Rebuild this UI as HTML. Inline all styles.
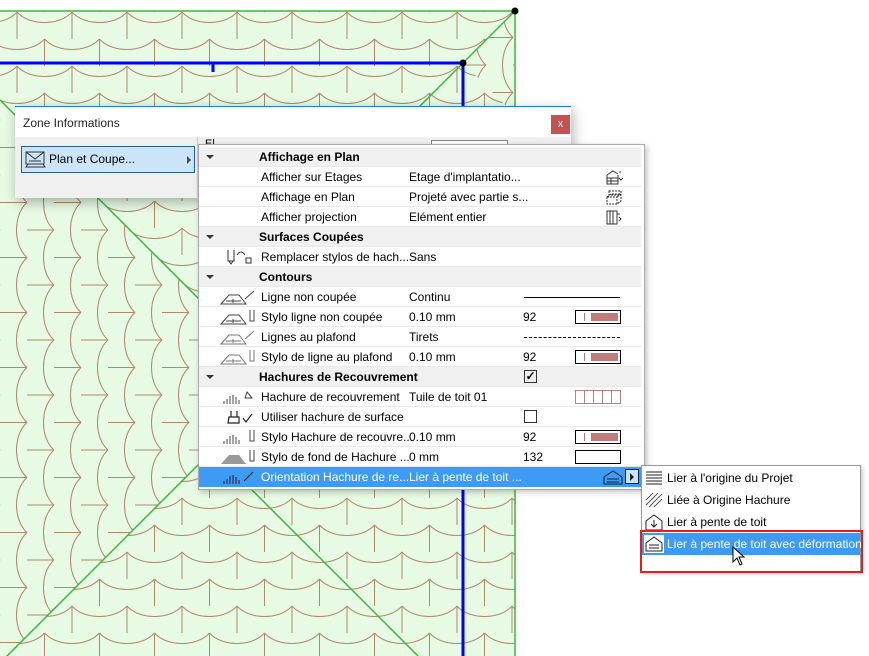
<!DOCTYPE html>
<html><head><meta charset="utf-8"><style>
*{margin:0;padding:0;box-sizing:border-box}
body{width:869px;height:656px;overflow:hidden;background:#fff;font-family:"Liberation Sans",sans-serif;font-size:12px;color:#000;position:relative}
.abs{position:absolute}
.row{position:absolute;left:199px;width:442px;height:20px;border-bottom:1px solid #e8e8e8;background:#fff}
.row span{position:absolute;top:3px;white-space:nowrap}
.hdr{background:#f0f0f0;font-weight:bold}
.tri{position:absolute;left:7px;top:8px;width:0;height:0;border-left:4px solid transparent;border-right:4px solid transparent;border-top:4px solid #333}
.l{left:62px}.v{left:210px}.n{left:324px}
.sw{position:absolute;left:376px;top:3px;width:46px;height:14px;border:1px solid #000;background:#fff}
.sw i{position:absolute;left:8px;top:2px;width:1px;height:8px;background:#c07070}
.sw b{position:absolute;left:15px;top:2px;width:27px;height:8px;background:#c07b7b}
.ic{position:absolute;left:20px;top:2px}
.ri{position:absolute;left:406px;top:2px}
.sel{background:#3d9bf6;color:#fff}
.mi{position:absolute;left:642px;width:218px;height:22px}
.mi span{position:absolute;left:25px;top:4px;white-space:nowrap}
</style></head><body>
<svg class="abs" style="left:0;top:0" width="869" height="656">
<defs>
<pattern id="p" width="55" height="54" patternUnits="userSpaceOnUse" x="17" y="12">
<path d="M0 0V27 M55 0V27 M0 0C12 14 43 14 55 0 M27.5 27V54 M-27.5 27C-15 41 15 41 27.5 27 M27.5 27C40 41 70 41 82.5 27 M0 54C12 68 43 68 55 54" fill="none" stroke="#b0886c" stroke-width="1"/>
</pattern>
<pattern id="q" width="55" height="54" patternUnits="userSpaceOnUse" x="10" y="0" patternTransform="rotate(90)">
<path d="M0 0V27 M55 0V27 M0 0C12 14 43 14 55 0 M27.5 27V54 M-27.5 27C-15 41 15 41 27.5 27 M27.5 27C40 41 70 41 82.5 27 M0 54C12 68 43 68 55 54" fill="none" stroke="#b0886c" stroke-width="1"/>
</pattern>
</defs>
<rect x="0" y="11" width="515" height="645" fill="#e6fae4"/>
<rect x="0" y="11" width="515" height="645" fill="url(#p)"/>
<polygon points="0,100 281,381 0,663" fill="#e6fae4"/>
<polygon points="0,100 281,381 0,663" fill="url(#q)"/>
<polygon points="515,11 463,63 515,115" fill="#e6fae4"/>
<polygon points="515,11 463,63 515,115" fill="url(#q)"/>
<path d="M0 11H515V656" fill="none" stroke="#3cb83c" stroke-width="1.5"/>
<path d="M515 11L300 226 M0 100L200 300 M230 433L0 663 M230 468L418 656" stroke="#3cb83c" stroke-width="1.5" fill="none"/>
<path d="M0 63H463V656 M213 63V72" stroke="#0000ff" stroke-width="3" fill="none"/>
<circle cx="515" cy="11" r="3.5" fill="#000"/><circle cx="463" cy="63" r="3.5" fill="#000"/>
</svg>
<!-- dialog -->
<div class="abs" style="left:15px;top:106px;width:556px;height:92px;background:#f0f0f0;border-top:1px solid #1a7ee0;box-shadow:2px 4px 12px rgba(0,0,0,.3)">
<div class="abs" style="left:0;top:0;width:556px;height:30px;background:#fff"></div>
<div class="abs" style="left:8px;top:9px;font-size:12px;color:#222">Zone Informations</div>
<div class="abs" style="left:536px;top:8px;width:19px;height:19px;background:#c75050;color:#fff;font-size:11px;text-align:center;line-height:18px">x</div>
<div class="abs" style="left:6px;top:39px;width:174px;height:27px;background:#cce4f7;border:1px solid #2a5f96"></div>
<svg class="abs" style="left:10px;top:43px" width="22" height="18"><path d="M1 2H19V14H1Z M1 2L10 9L19 2 M3 14L1 17H20L18 14 M4 11H16" fill="none" stroke="#333"/></svg>
<div class="abs" style="left:34px;top:45px">Plan et Coupe...</div>
<div class="abs" style="left:172px;top:49px;border-top:4px solid transparent;border-bottom:4px solid transparent;border-left:4px solid #444"></div>
<div class="abs" style="left:182px;top:30px;width:1px;height:62px;background:#ccc"></div>
<div class="abs" style="left:190px;top:31px;font-size:11px">El</div>
<div class="abs" style="left:416px;top:33px;width:77px;height:12px;border:1px solid #888;background:#fff"></div>
</div>
<!-- panel -->
<div class="abs" style="left:198px;top:144px;width:447px;height:346px;background:#fff;border:1px solid #aaa;box-shadow:2px 2px 6px rgba(0,0,0,.25)"></div>
<div class="row hdr" style="top:147px"><div class="tri"></div><span style="left:60px">Affichage en Plan</span></div>
<div class="row" style="top:167px"><span class="l">Afficher sur Etages</span><span class="v">Etage d'implantatio...</span><svg class="ri" width="18" height="16"><path d="M2 6L8 2L13 5 M2 6V15H13V6 M2 9H13M2 12H13M6 9V15 M15 2V4M14 9L16 11L18 9" fill="none" stroke="#333"/></svg></div>
<div class="row" style="top:187px"><span class="l">Affichage en Plan</span><span class="v">Projeté avec partie s...</span><svg class="ri" width="18" height="16"><path d="M4 2H16V6H4Z M2 8L6 5H16V12L12 15H2Z M2 8H12V15 M12 8L16 5" fill="none" stroke="#333" stroke-dasharray="2 1"/></svg></div>
<div class="row" style="top:207px"><span class="l">Afficher projection</span><span class="v">Elément entier</span><svg class="ri" width="18" height="16"><path d="M2 2H12V15H2Z M5 2V15M8 2V15 M12 5H15M14 8L16 10L14 12" fill="none" stroke="#333"/></svg></div>
<div class="row hdr" style="top:227px"><div class="tri"></div><span style="left:60px">Surfaces Coupées</span></div>
<div class="row" style="top:247px"><svg class="ic" width="36" height="16"><path d="M9 1V12H15V1 M10 12L12 15L14 12 M18 6Q22 0 26 6 M27 9h5v5h-5z" fill="none" stroke="#333"/></svg><span class="l">Remplacer stylos de hach...</span><span class="v">Sans</span></div>
<div class="row hdr" style="top:267px"><div class="tri"></div><span style="left:60px">Contours</span></div>
<div class="row" style="top:287px"><svg class="ic" width="40" height="16"><path d="M2 15L10 6H20L27 15Z M7 12H22 M14 10V14 M26 10L35 2" fill="none" stroke="#444"/></svg><span class="l">Ligne non coupée</span><span class="v">Continu</span><div class="abs" style="left:325px;top:10px;width:96px;height:1px;background:#000"></div></div>
<div class="row" style="top:307px"><svg class="ic" width="40" height="16"><path d="M2 15L10 6H20L27 15Z M7 12H22 M14 10V14 M31 1V12H35V1" fill="none" stroke="#444"/></svg><span class="l">Stylo ligne non coupée</span><span class="v">0.10 mm</span><span class="n">92</span><div class="sw"><i></i><b></b></div></div>
<div class="row" style="top:327px"><svg class="ic" width="40" height="16"><path d="M2 15L10 6H20L27 15Z M7 12H22 M14 10V14 M26 10L35 2" fill="none" stroke="#777"/></svg><span class="l">Lignes au plafond</span><span class="v">Tirets</span><div class="abs" style="left:325px;top:10px;width:96px;height:0;border-top:1px dashed #000"></div></div>
<div class="row" style="top:347px"><svg class="ic" width="40" height="16"><path d="M2 15L10 6H20L27 15Z M7 12H22 M14 10V14 M31 1V12H35V1" fill="none" stroke="#777"/></svg><span class="l">Stylo de ligne au plafond</span><span class="v">0.10 mm</span><span class="n">92</span><div class="sw"><i></i><b></b></div></div>
<div class="row hdr" style="top:367px"><div class="tri"></div><span style="left:60px">Hachures de Recouvrement</span><div class="abs" style="left:325px;top:3px;width:13px;height:13px;border:1px solid #333;font-size:12px;line-height:11px;text-align:center">✓</div></div>
<div class="row" style="top:387px"><svg class="ic" width="40" height="16"><path d="M5 15V12M8 15V10M11 15V7M14 15V6M17 15V8M20 15V11M28 3L33 9H26Z" fill="none" stroke="#444"/></svg><span class="l">Hachure de recouvrement</span><span class="v">Tuile de toit 01</span><div class="sw" style="background:repeating-linear-gradient(90deg,#fff 0 8px,#c08080 8px 9px);border-color:#c08080"></div></div>
<div class="row" style="top:407px"><svg class="ic" width="40" height="16"><path d="M12 2V8H18V2 M9 14H20V8H10Z M24 9L27 13L33 5" fill="none" stroke="#222" stroke-width="1.2"/></svg><span class="l">Utiliser hachure de surface</span><div class="abs" style="left:325px;top:3px;width:13px;height:13px;border:1px solid #333"></div></div>
<div class="row" style="top:427px"><svg class="ic" width="40" height="16"><path d="M5 15V12M8 15V10M11 15V7M14 15V6M17 15V8M20 15V11 M31 1V12H35V1" fill="none" stroke="#444"/></svg><span class="l">Stylo Hachure de recouvre...</span><span class="v">0.10 mm</span><span class="n">92</span><div class="sw"><i></i><b></b></div></div>
<div class="row" style="top:447px"><svg class="ic" width="40" height="16"><path d="M2 15L10 6H20L27 15Z" fill="#999"/><path d="M31 1V12H35V1" fill="none" stroke="#444"/></svg><span class="l">Stylo de fond de Hachure ...</span><span class="v">0 mm</span><span class="n">132</span><div class="sw"></div></div>
<div class="row sel" style="top:467px;border-bottom:none"><svg class="ic" width="40" height="16"><path d="M5 15V12M8 15V10M11 15V7M14 15V6M17 15V8M20 15V11 M25 12L34 3" fill="none" stroke="#222"/></svg><span class="l">Orientation Hachure de re...</span><span class="v">Lier à pente de toit ...</span>
<svg class="abs" style="left:404px;top:2px" width="20" height="16"><path d="M1 15V8L10 2L19 8V15Z M4 10H16M4 13H16" fill="none" stroke="#123"/></svg>
<div class="abs" style="left:426px;top:2px;width:14px;height:15px;background:#cce4f7;border:1px solid #123"><div class="abs" style="left:4px;top:3px;border-top:4px solid transparent;border-bottom:4px solid transparent;border-left:4px solid #222"></div></div></div>
<!-- submenu -->
<div class="abs" style="left:641px;top:465px;width:220px;height:107px;background:#fff;border:1px solid #999;box-shadow:2px 2px 4px rgba(0,0,0,.2)"></div>
<div class="mi" style="top:467px"><svg class="abs" style="left:3px;top:3px" width="18" height="16"><path d="M1 2H17M1 5H17M1 8H17M1 11H17M1 14H17" stroke="#222"/></svg><span>Lier à l'origine du Projet</span></div>
<div class="mi" style="top:489px"><svg class="abs" style="left:3px;top:3px" width="18" height="16"><path d="M1 8L8 1M1 13L13 1M4 15L17 2M9 15L17 7" stroke="#555"/></svg><span>Liée à Origine Hachure</span></div>
<div class="mi" style="top:511px"><svg class="abs" style="left:3px;top:2px" width="18" height="18"><path d="M1 17V8L9 2L17 8V17Z M9 7V14M6 11L9 14L12 11" fill="none" stroke="#222"/></svg><span>Lier à pente de toit</span></div>
<div class="mi" style="top:533px;background:#3d9bf6;color:#fff"><svg class="abs" style="left:2px;top:2px" width="20" height="18"><rect x="0" y="0" width="20" height="18" fill="#fff"/><path d="M2 16V8L10 2L18 8V16Z M5 10H15M5 13H15" fill="none" stroke="#222"/></svg><span>Lier à pente de toit avec déformation</span></div>
<div class="abs" style="left:640px;top:530px;width:223px;height:43px;border:2px solid #e41e1e"></div>
<svg class="abs" style="left:732px;top:546px" width="14" height="22"><path d="M1 1V16L5 12L8 19L10 18L7 11H12Z" fill="#fff" stroke="#000"/></svg>
</body></html>
